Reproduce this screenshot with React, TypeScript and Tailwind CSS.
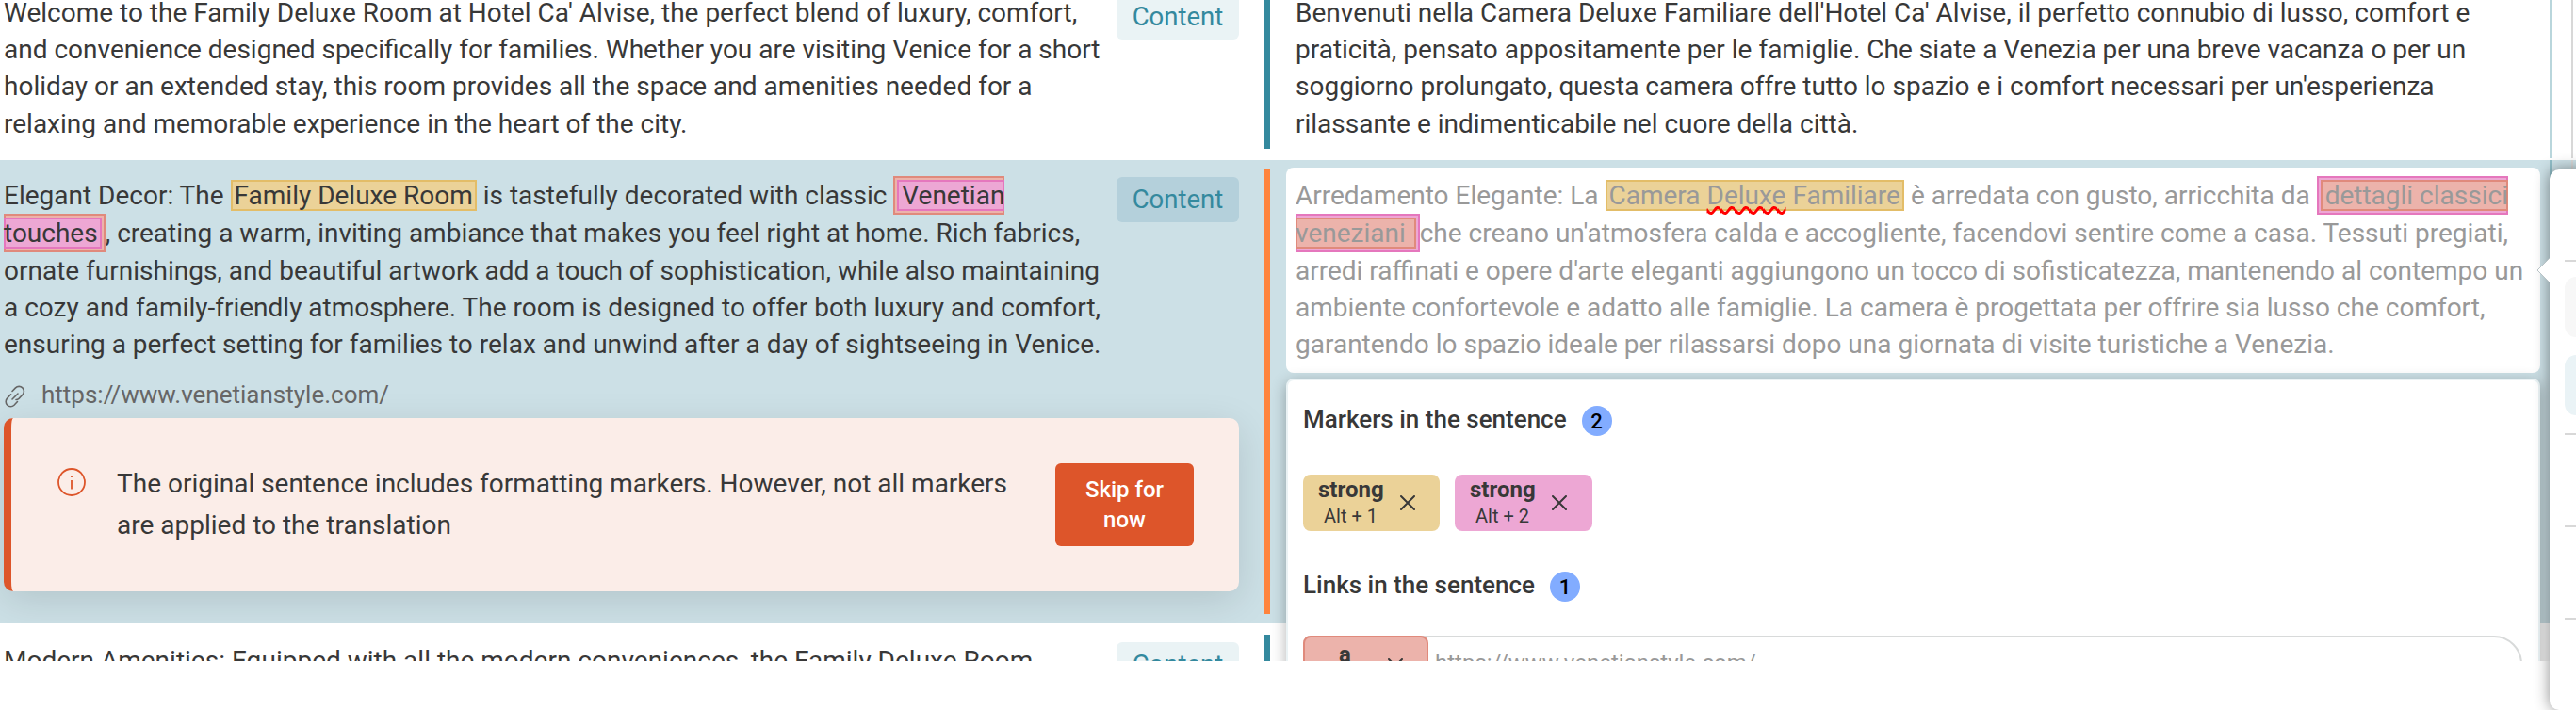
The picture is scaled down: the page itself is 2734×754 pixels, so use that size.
import type { ReactNode } from "react";
import clsx from "clsx";

const sourceIntro = [
  "Welcome to the Family Deluxe Room at Hotel Ca' Alvise, the perfect blend of luxury, comfort,",
  "and convenience designed specifically for families. Whether you are visiting Venice for a short",
  "holiday or an extended stay, this room provides all the space and amenities needed for a",
  "relaxing and memorable experience in the heart of the city."
];

const targetIntro = [
  "Benvenuti nella Camera Deluxe Familiare dell'Hotel Ca' Alvise, il perfetto connubio di lusso, comfort e",
  "praticità, pensato appositamente per le famiglie. Che siate a Venezia per una breve vacanza o per un",
  "soggiorno prolungato, questa camera offre tutto lo spazio e i comfort necessari per un'esperienza",
  "rilassante e indimenticabile nel cuore della città."
];

function Line({ children, tall }: { children: ReactNode; tall?: boolean }) {
  return <p className={clsx("whitespace-pre", tall ? "h-10 leading-10" : "h-[39.2px] leading-[39.2px]")}>{children}</p>;
}

function ContentTag({ active }: { active?: boolean }) {
  return (
    <span
      className={clsx(
        "flex h-12 w-[130px] shrink-0 items-center justify-center rounded-md text-[27.5px] text-[#34899e]",
        active ? "bg-[#b4d0db]" : "bg-[#eaf3f5]"
      )}
    >
      Content
    </span>
  );
}

function StatusBar({ pending }: { pending?: boolean }) {
  return <div className={clsx("my-2.5 ml-[27px] w-1.5 shrink-0", pending ? "bg-[#ff843d]" : "bg-[#34899e]")} />;
}

type MarkProps = {
  tone: "yellow" | "pink" | "red";
  outer?: "pink" | "red";
  edge?: "start" | "end" | "both";
  children: ReactNode;
};

const tones = {
  yellow: "border-[#e3bd68] bg-[#ebd298]",
  pink: "border-[#e577bd] bg-[#eda7d4]",
  red: "border-[#e08a7c] bg-[#ecb3ab]"
};

// A nested pair of marks that wraps onto the next line stays closed on both sides,
// with the inner border drawn over the outer one at the break.
function Mark({ tone, outer, edge = "both", children }: MarkProps) {
  const inner = (
    <span
      className={clsx("inline-block h-[33px] border-2 leading-[29px]", tones[tone], {
        "px-0.5": edge === "both",
        "-mr-0.5 pl-[3px]": edge === "start",
        "-ml-0.5 pr-0.5": edge === "end"
      })}
    >
      <span className={clsx({ "-mr-0.5": edge === "start", "-ml-0.5": edge === "end" })}>{children}</span>
    </span>
  );
  if (!outer) return inner;
  return (
    <span
      className={clsx("-my-1 inline-block h-[41px] border-2 py-0.5 leading-[29px]", tones[outer], {
        "pl-0.5": edge === "start",
        "pr-0.5": edge === "end"
      })}
    >
      {inner}
    </span>
  );
}

function CloseIcon() {
  return (
    <svg viewBox="0 0 16 16" className="size-4" fill="none" stroke="#383838" strokeWidth="2" strokeLinecap="round">
      <path d="M1 1l14 14M15 1L1 15" />
    </svg>
  );
}

function MarkerChip({ name, shortcut, className }: { name: string; shortcut: string; className: string }) {
  return (
    <div className={clsx("flex h-[60px] items-center rounded-lg pl-4", className)}>
      <div className="w-[69px] text-center text-[#383838]">
        <div className="text-2xl leading-[28px] font-bold">{name}</div>
        <div className="text-[20px] leading-[28px]">{shortcut}</div>
      </div>
      <div className="ml-[18px]">
        <CloseIcon />
      </div>
    </div>
  );
}

function CountHeading({ label, count }: { label: string; count: number }) {
  return (
    <div className="flex h-8 items-center gap-4">
      <h3 className="-mt-1 text-[26px] leading-8 font-medium text-[#383838]">{label}</h3>
      <span className="flex size-8 items-center justify-center rounded-full bg-[#82acff] text-[22px] font-medium text-black">
        {count}
      </span>
    </div>
  );
}

function MarkersPanel() {
  return (
    <div className="absolute top-[402px] left-[1365px] z-10 h-[340px] w-[1331px] rounded-lg border-2 border-[#eaf2f4] bg-white pt-[27px] pr-4 pl-4 shadow-[0_4px_16px_rgba(0,0,0,0.3)]">
      <CountHeading label="Markers in the sentence" count={2} />
      <div className="mt-[41px] flex gap-4">
        <MarkerChip name="strong" shortcut="Alt + 1" className="w-[145px] bg-[#ebd298]" />
        <MarkerChip name="strong" shortcut="Alt + 2" className="w-[146px] bg-[#eda7d4]" />
      </div>
      <div className="mt-[43px]">
        <CountHeading label="Links in the sentence" count={1} />
      </div>
      <div className="mt-9 flex h-[60px] w-[1294px] rounded-[30px] rounded-l-lg border-2 border-[#d8dada] bg-white">
        <div className="-my-0.5 -ml-0.5 flex w-[133px] rounded-lg border-2 border-[#e08a7c] bg-[#ecb3ab] pl-9">
          <div className="pt-px text-2xl leading-[34px] font-bold text-[#383838]">a</div>
          <div className="mt-[22px] ml-[39px]">
            <CloseIcon />
          </div>
        </div>
        <div className="ml-[7px] text-2xl leading-[55px] text-[#999]">https://www.venetianstyle.com/</div>
      </div>
    </div>
  );
}

function FormattingAlert() {
  return (
    <div className="flex h-[184px] w-[1311px] rounded-[10px] border-l-8 border-[#dd552a] bg-[#fbede8] pl-[49px] shadow-[0_10px_40px_rgba(0,0,0,0.12)]">
      <svg viewBox="0 0 30 30" className="mt-[53px] size-[30px] shrink-0" fill="none" stroke="#dd552a">
        <circle cx="15" cy="15" r="14" strokeWidth="1.8" />
        <path d="M15 13v9.5M15 8v2" strokeWidth="1.8" />
      </svg>
      <p className="mt-12 ml-[33px] text-[28px] leading-[44px] whitespace-pre text-[#383838]">
        {"The original sentence includes formatting markers. However, not all markers\nare applied to the translation"}
      </p>
      <button className="mt-12 mr-12 ml-auto h-[88px] w-[147px] rounded-md bg-[#dd552a] px-6 text-2xl leading-8 font-medium text-white">
        Skip for now
      </button>
    </div>
  );
}

function SidePanel() {
  return (
    <aside className="absolute top-[180px] left-[2706px] z-20 h-[574px] w-16 rounded-[10px] bg-white pl-4 shadow-[0_0_16px_rgba(0,0,0,0.45)]">
      <svg viewBox="0 0 14 26" className="absolute top-[94px] -left-3.5 h-[26px] w-3.5">
        <path d="M14 0L1 13l13 13" fill="#fff" stroke="#b9c3c6" strokeWidth="1" />
      </svg>
      <div className="mt-24 h-0.5 bg-[#d8d8d8]" />
      <div className="mt-4 h-16 rounded-xl bg-[#f7f7f7]" />
      <div className="mt-[19px] h-16 rounded-xl bg-[#eaf3f6]" />
      <div className="mt-[19px] h-0.5 bg-[#d8d8d8]" />
      <div className="mt-24 h-0.5 bg-[#d8d8d8]" />
      <div className="mt-24 h-0.5 bg-[#d8d8d8]" />
    </aside>
  );
}

export default function App() {
  return (
    <div className="relative h-[754px] w-[2734px] overflow-hidden bg-white font-[Roboto,sans-serif] text-[28px] text-[#383838]">
      <div className="relative h-[702px] overflow-hidden">
        <div className="flex h-[168px]">
          <div className="w-[1181px] shrink-0 pl-1">
            <div className="-mt-[6px]">
              {sourceIntro.map((line) => (
                <Line key={line}>{line}</Line>
              ))}
            </div>
          </div>
          <div className="-mt-1.5 ml-1">
            <ContentTag />
          </div>
          <div className="-mt-2.5 flex">
            <StatusBar />
          </div>
          <div className="-mt-[6px] ml-[27px] w-[1331px] shrink-0">
            {targetIntro.map((line) => (
              <Line key={line}>{line}</Line>
            ))}
          </div>
          <div className="w-0.5 shrink-0 bg-[#b9d6dc]" />
          <div className="ml-[21px] w-0.5 shrink-0 bg-[#d8d8d8]" />
        </div>

        <div className="mt-0.5 flex h-[492px] overflow-hidden bg-[#cce0e6]">
          <div className="w-[1181px] shrink-0 pl-1">
            <div className="pt-[18px]">
              <Line tall>
                Elegant Decor: The <Mark tone="yellow">Family Deluxe Room</Mark> is tastefully decorated with classic{" "}
                <Mark tone="pink" outer="red" edge="start">Venetian</Mark>
              </Line>
              <Line tall>
                <Mark tone="pink" outer="red" edge="end">touches</Mark>, creating a warm, inviting ambiance that makes you feel right at home. Rich fabrics,
              </Line>
              <Line>ornate furnishings, and beautiful artwork add a touch of sophistication, while also maintaining</Line>
              <Line>a cozy and family-friendly atmosphere. The room is designed to offer both luxury and comfort,</Line>
              <Line>ensuring a perfect setting for families to relax and unwind after a day of sightseeing in Venice.</Line>
            </div>
            <div className="mt-[18px] flex h-8 items-center text-[26px] text-[#666]">
              <svg viewBox="0 0 24 24" className="mt-0.5 size-6" fill="none" stroke="#666" strokeWidth="1.6" strokeLinecap="round">
                <path d="M9 6.5l3.5-3.6a5.1 5.1 0 017.4 7.3L16 14.3a5.1 5.1 0 01-3 1.2M14.5 17.5L11 21.2a5.1 5.1 0 01-7.3-7.3L7.6 9.8M9 15l6-6" />
              </svg>
              <span className="ml-4">https://www.venetianstyle.com/</span>
            </div>
            <div className="mt-2">
              <FormattingAlert />
            </div>
          </div>
          <div className="mt-[18px] ml-1">
            <ContentTag active />
          </div>
          <StatusBar pending />
          <div className="mt-2 ml-[17px] h-[218px] w-[1331px] shrink-0 rounded-lg bg-white pt-2.5 pl-2.5 text-[#999]">
            <Line tall>
              Arredamento Elegante: La{" "}
              <Mark tone="yellow">
                Camera <span className="underline decoration-[#f00] decoration-wavy decoration-[3px] [text-decoration-skip-ink:none]">Deluxe</span> Familiare
              </Mark>{" "}
              è arredata con gusto, arricchita da <Mark tone="red" outer="pink" edge="start">dettagli classici</Mark>
            </Line>
            <Line tall>
              <Mark tone="red" outer="pink" edge="end">{"veneziani "}</Mark>che creano un'atmosfera calda e accogliente, facendovi sentire come a casa. Tessuti pregiati,
            </Line>
            <Line>arredi raffinati e opere d'arte eleganti aggiungono un tocco di sofisticatezza, mantenendo al contempo un</Line>
            <Line>ambiente confortevole e adatto alle famiglie. La camera è progettata per offrire sia lusso che comfort,</Line>
            <Line>garantendo lo spazio ideale per rilassarsi dopo una giornata di visite turistiche a Venezia.</Line>
          </div>
          <div className="ml-2.5 w-0.5 shrink-0 bg-[#8fbcc6]" />
          <div className="ml-[21px] w-0.5 shrink-0 bg-[#d8d8d8]" />
        </div>

        <div className="mt-0.5 flex h-[200px]">
          <p className="w-[1181px] shrink-0 pt-[18px] pl-1 leading-[39.2px]">
            Modern Amenities: Equipped with all the modern conveniences, the Family Deluxe Room
          </p>
          <div className="mt-[18px] ml-1">
            <ContentTag />
          </div>
          <StatusBar />
        </div>
        <MarkersPanel />
      </div>
      <SidePanel />
    </div>
  );
}
